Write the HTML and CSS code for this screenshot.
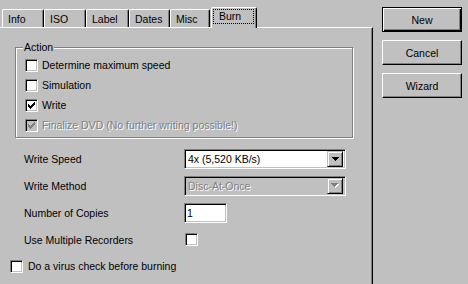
FILE: index.html
```html
<!DOCTYPE html>
<html>
	<head>
		<title>Burn</title>
		<link rel="stylesheet" href="styles.css">
	</head>
	<body>
	<div class="window">
		<div class="sheet">
			<div class="tabs">
				<span class="tab">Info</span>
				<span class="tab">ISO</span>
				<span class="tab">Label</span>
				<span class="tab">Dates</span>
				<span class="tab">Misc</span>
				<span class="tab active"><span class="focus">Burn</span></span>
			</div>
			<div class="panel">
				<div class="group">
					<span class="legend">Action</span>
					<div class="check"><span class="box"></span>Determine maximum speed</div>
					<div class="check"><span class="box"></span>Simulation</div>
					<div class="check"><span class="box"><svg width="7" height="7" viewBox="0 0 7 7"><path d="M0 2h1v3H0z M1 3h1v3H1z M2 4h1v3H2z M3 3h1v3H3z M4 2h1v3H4z M5 1h1v3H5z M6 0h1v3H6z"/></svg></span>Write</div>
					<div class="check disabled"><span class="box"><svg width="7" height="7" viewBox="0 0 7 7"><path d="M0 2h1v3H0z M1 3h1v3H1z M2 4h1v3H2z M3 3h1v3H3z M4 2h1v3H4z M5 1h1v3H5z M6 0h1v3H6z"/></svg></span><span class="gray">Finalize DVD (No further writing possible!)</span></div>
				</div>
				<div class="fields">
					<div class="row">
						<span class="lbl">Write Speed</span>
						<div class="combo"><span class="value">4x (5,520 KB/s)</span><span class="drop"><svg width="7" height="4" viewBox="0 0 7 4"><path d="M0 0h7v1H0z M1 1h5v1H1z M2 2h3v1H2z M3 3h1v1H3z"/></svg></span></div>
					</div>
					<div class="row">
						<span class="lbl">Write Method</span>
						<div class="combo off"><span class="value gray">Disc-At-Once</span><span class="drop"><svg width="8" height="5" viewBox="0 0 8 5"><path class="hi" d="M1 1h7v1H1z M2 2h5v1H2z M3 3h3v1H3z M4 4h1v1H4z"/><path d="M0 0h7v1H0z M1 1h5v1H1z M2 2h3v1H2z M3 3h1v1H3z"/></svg></span></div>
					</div>
					<div class="row">
						<span class="lbl">Number of Copies</span>
						<div class="edit">1</div>
					</div>
					<div class="row">
						<span class="lbl">Use Multiple Recorders</span>
						<span class="box single"></span>
					</div>
				</div>
				<div class="check virus"><span class="box"></span>Do a virus check before burning</div>
			</div>
		</div>
		<div class="buttons">
			<div class="btn default"><span>New</span></div>
			<div class="btn"><span>Cancel</span></div>
			<div class="btn"><span>Wizard</span></div>
		</div>
	</div>
	</body>
</html>
```

FILE: styles.css
```css
body{margin:0; background:#c0c0c0; font-family:"Liberation Sans", Arial, sans-serif; font-size:10.5px; color:#000;}
.window{display:flex; height:284px; overflow:hidden;}
.sheet{width:373px; display:flex; flex-direction:column;}

.tabs{display:flex; align-items:flex-end; height:27px; padding-left:2px; box-sizing:border-box;}
.tab
{
	width:42px;
	height:18px;
	box-sizing:border-box;
	padding:2px 0 0 5px;
	border-top:1px solid #fff;
	border-left:1px solid #fff;
	border-right:1px solid #000;
	border-radius:2px 2px 0 0;
	box-shadow:inset -1px 0 #808080;
	line-height:14px;
}
.tab:nth-child(3){width:43px;}
.tab:nth-child(4){width:41px;}
.tab:nth-child(5){width:40px;}
.tab.active
{
	position:relative;
	z-index:1;
	width:46px;
	height:21px;
	margin-left:1px;
	margin-bottom:-1px;
	padding:1px 0 0 1px;
	background:#c0c0c0;
}
.focus{display:block; width:41px; height:15px; box-sizing:border-box; border:1px dotted #000; padding-left:5px; line-height:13px;}

.panel{flex:1; border-top:1px solid #fff; border-right:1px solid #000; box-shadow:inset -1px 0 #808080;}

.group
{
	width:338px;
	box-sizing:border-box;
	margin:19px 0 0 15px;
	padding:0 0 2px 9px;
	border:1px solid #808080;
	box-shadow:1px 1px 0 #fff, inset 1px 1px 0 #fff;
}
.legend{display:table; margin:-8px 0 1px -2px; padding:0 1px 0 1px; background:#c0c0c0; line-height:14px;}

.check{display:flex; align-items:center; height:20px;}
.box
{
	width:13px;
	height:13px;
	box-sizing:border-box;
	margin-right:4px;
	display:flex;
	align-items:center;
	justify-content:center;
	background:#fff;
	border:1px solid;
	border-color:#808080 #fff #fff #808080;
	box-shadow:inset 1px 1px #000, inset -1px -1px #c0c0c0;
	flex-shrink:0;
}
.disabled .box{background:#c0c0c0;}
.disabled svg{fill:#808080;}
.gray{color:#808080; text-shadow:1px 1px #fff;}

.fields{margin-top:7px;}
.row{display:flex; align-items:center; height:27px; padding-left:24px;}
.lbl{width:160px;}
.combo
{
	width:162px;
	height:20px;
	box-sizing:border-box;
	display:flex;
	align-items:center;
	padding:2px;
	background:#fff;
	border:1px solid;
	border-color:#808080 #fff #fff #808080;
	box-shadow:inset 1px 1px #000, inset -1px -1px #c0c0c0;
}
.combo.off{background:#c0c0c0;}
.value{flex:1; padding-left:1px;}
.drop
{
	width:16px;
	height:16px;
	box-sizing:border-box;
	display:flex;
	align-items:center;
	justify-content:center;
	background:#c0c0c0;
	border:1px solid;
	border-color:#c0c0c0 #000 #000 #c0c0c0;
	box-shadow:inset 1px 1px #fff, inset -1px -1px #808080;
}
.off .drop svg{fill:#808080;}
.off .drop .hi{fill:#fff;}
.edit
{
	width:43px;
	height:20px;
	box-sizing:border-box;
	padding:2px 0 0 2px;
	line-height:14px;
	background:#fff;
	border:1px solid;
	border-color:#808080 #fff #fff #808080;
	box-shadow:inset 1px 1px #000, inset -1px -1px #c0c0c0;
}
.box.single{margin-left:1px;}
.virus{margin-top:3px; padding-left:10px; height:20px;}
.virus .box{margin-right:5px;}

.buttons{margin-left:9px; padding-top:7px; width:80px; display:flex; flex-direction:column; gap:8px;}
.btn
{
	height:25px;
	box-sizing:border-box;
	display:flex;
	align-items:center;
	justify-content:center;
	border:1px solid;
	border-color:#fff #000 #000 #fff;
	box-shadow:inset -1px -1px #808080;
}
.btn.default{border-color:#000; box-shadow:inset 1px 1px #fff, inset -1px -1px #000, inset -2px -2px #808080;}
```
